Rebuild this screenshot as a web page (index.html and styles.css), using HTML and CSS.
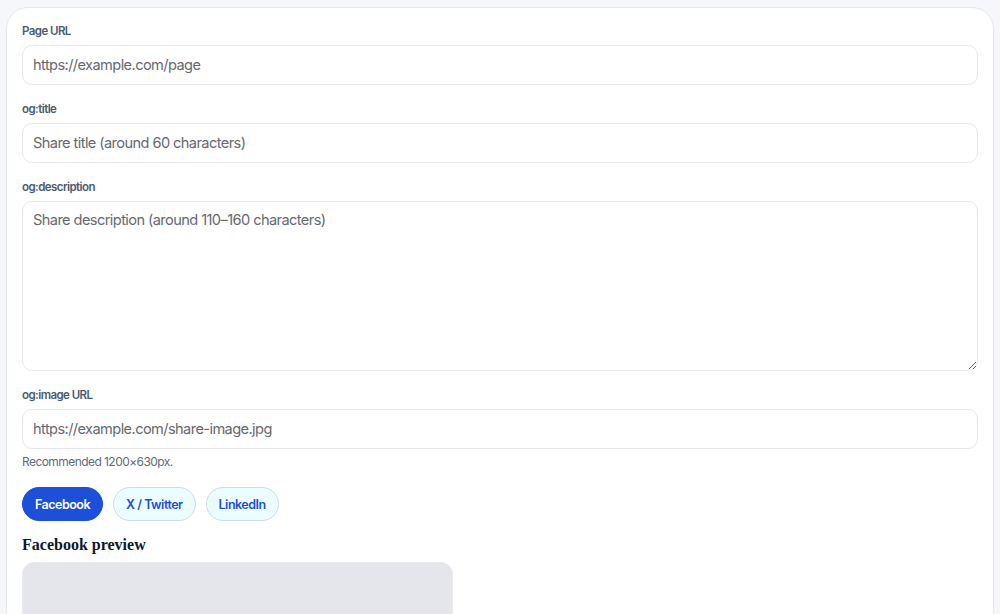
FILE: index.html
```html
<!DOCTYPE html>
<html lang="en">
<head>
<meta charset="utf-8">
<title>OG preview</title>
<link rel="stylesheet" href="styles.css">
</head>
<body>
<main class="card">
  <div class="field">
    <label class="label" for="url">Page URL</label>
    <input class="input" id="url" type="text" placeholder="https://example.com/page">
  </div>
  <div class="field">
    <label class="label" for="title">og:title</label>
    <input class="input" id="title" type="text" placeholder="Share title (around 60 characters)">
  </div>
  <div class="field">
    <label class="label" for="desc">og:description</label>
    <textarea class="input textarea" id="desc" placeholder="Share description (around 110–160 characters)"></textarea>
  </div>
  <div class="field">
    <label class="label" for="img">og:image URL</label>
    <input class="input" id="img" type="text" placeholder="https://example.com/share-image.jpg">
    <p class="hint">Recommended 1200×630px.</p>
  </div>
  <div class="tabs">
    <button class="tab active">Facebook</button>
    <button class="tab">X / Twitter</button>
    <button class="tab">LinkedIn</button>
  </div>
  <h2 class="preview-title">Facebook preview</h2>
  <div class="preview">
    <div class="preview-image"></div>
  </div>
</main>
</body>
</html>
```
FILE: styles.css
```css
* { box-sizing: border-box; }
html, body { margin: 0; }
body {
  background: #f6f7fa;
  padding: 7px 6px 0 6px;
  font-family: Inter, "Noto Sans", sans-serif;
  letter-spacing: -0.035em;
  height: 614px;
  overflow: hidden;
}
.card {
  background: #fff;
  border: 1px solid #e6e8ee;
  border-radius: 22px;
  padding: 15px 15px 40px;
  min-height: 700px;
  display: flex;
  flex-direction: column;
}
.field {
  display: flex;
  flex-direction: column;
  margin-bottom: 16px;
}
.label {
  font-size: 11.5px;
  font-weight: 600;
  color: #4b5a73;
  line-height: 16px;
  margin-bottom: 6px;
}
.input {
  height: 40px;
  border: 1px solid #e5e7eb;
  border-radius: 10px;
  padding: 0 10px;
  font-family: Inter, "Noto Sans", sans-serif;
  font-size: 14.6px;
  letter-spacing: -0.04em;
  color: #111827;
  background: #fff;
  outline: none;
}
.input::placeholder { color: #66696f; }
.textarea {
  height: 170px;
  padding: 8px 10px;
  resize: vertical;
  line-height: 20px;
}
.hint {
  margin: 6px 0 0;
  font-size: 12px;
  line-height: 14px;
  color: #5f6b7d;
}
.tabs {
  display: flex;
  gap: 10px;
  margin-top: 2px;
}
.tab {
  height: 34px;
  padding: 0 12px;
  border-radius: 17px;
  border: 1px solid #c7ddf7;
  background: #ecfdff;
  color: #1d4ed8;
  font-family: Inter, "Noto Sans", sans-serif;
  font-size: 12.5px;
  letter-spacing: -0.04em;
  font-weight: 600;
}
.tab.active {
  background: #1d4fd9;
  border-color: #1d4fd9;
  color: #fff;
}
.preview-title {
  font-family: "Liberation Serif", "DejaVu Serif", serif;
  font-size: 16px;
  letter-spacing: 0;
  font-weight: 700;
  color: #0f172a;
  margin: 15px 0 8px;
  line-height: 18px;
}
.preview {
  width: 431px;
}
.preview-image {
  height: 226px;
  background: #e4e6eb;
  border: 1px solid #e8eaee;
  border-radius: 12px 12px 0 0;
}
```
